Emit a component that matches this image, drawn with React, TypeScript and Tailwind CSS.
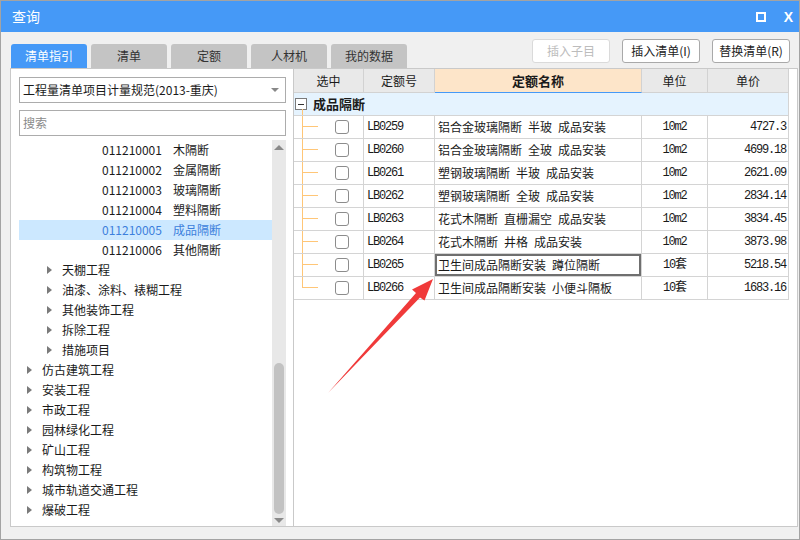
import React from "react";

type TreeRow = { level: 1 | 2 | 3; code?: string; name: string; active?: boolean };

const treeRows: TreeRow[] = [
  { level: 3, code: "011210001", name: "木隔断" },
  { level: 3, code: "011210002", name: "金属隔断" },
  { level: 3, code: "011210003", name: "玻璃隔断" },
  { level: 3, code: "011210004", name: "塑料隔断" },
  { level: 3, code: "011210005", name: "成品隔断", active: true },
  { level: 3, code: "011210006", name: "其他隔断" },
  { level: 2, name: "天棚工程" },
  { level: 2, name: "油漆、涂料、裱糊工程" },
  { level: 2, name: "其他装饰工程" },
  { level: 2, name: "拆除工程" },
  { level: 2, name: "措施项目" },
  { level: 1, name: "仿古建筑工程" },
  { level: 1, name: "安装工程" },
  { level: 1, name: "市政工程" },
  { level: 1, name: "园林绿化工程" },
  { level: 1, name: "矿山工程" },
  { level: 1, name: "构筑物工程" },
  { level: 1, name: "城市轨道交通工程" },
  { level: 1, name: "爆破工程" },
];

const rows = [
  ["LB0259", "铝合金玻璃隔断 半玻 成品安装", "10m2", "4727.3"],
  ["LB0260", "铝合金玻璃隔断 全玻 成品安装", "10m2", "4699.18"],
  ["LB0261", "塑钢玻璃隔断 半玻 成品安装", "10m2", "2621.09"],
  ["LB0262", "塑钢玻璃隔断 全玻 成品安装", "10m2", "2834.14"],
  ["LB0263", "花式木隔断 直栅漏空 成品安装", "10m2", "3834.45"],
  ["LB0264", "花式木隔断 井格 成品安装", "10m2", "3873.98"],
  ["LB0265", "卫生间成品隔断安装 蹲位隔断", "10套", "5218.54"],
  ["LB0266", "卫生间成品隔断安装 小便斗隔板", "10套", "1683.16"],
];

const tabs = ["清单指引", "清单", "定额", "人材机", "我的数据"];

const mono = "font-['Liberation_Mono','Noto_Sans_CJK_SC',monospace] text-[12px] tracking-[-1.2px]";

const Caret = () => (
  <span className="inline-block w-0 h-0 border-y-[4px] border-y-transparent border-l-[5px] border-l-[#7a7a7a]" />
);

const App = () => {
  return (
    <div className="relative w-[800px] h-[540px] flex flex-col bg-[#f0f0f0] border border-[#a3a3a3] font-['Noto_Sans_CJK_SC',sans-serif] text-[#1a1a1a] overflow-hidden">
      {/* title bar */}
      <div className="h-[31px] bg-[#4599f7] flex items-center pl-[11px] pr-[6px] text-white">
        <span className="text-[14px]">查询</span>
        <div className="ml-auto flex items-center gap-[18px]">
          <span className="w-[10px] h-[10px] border-2 border-white" />
          <span className="font-['Liberation_Sans',sans-serif] font-bold text-[14px] leading-none">X</span>
        </div>
      </div>

      {/* tabs and buttons */}
      <div className="h-[36px] flex pl-[10px] pr-[9px]">
        <div className="flex gap-[4px] self-end">
          {tabs.map((t, i) => (
            <div
              key={t}
              className={
                i === 0
                  ? "w-[76px] h-[24px] rounded-t-[3px] bg-[#4599f7] text-white text-[12px] flex items-center justify-center"
                  : "w-[76px] h-[24px] rounded-t-[3px] bg-[#c4c4c4] text-[#333] text-[12px] flex items-center justify-center"
              }
            >
              {t}
            </div>
          ))}
        </div>
        <div className="ml-auto flex gap-[12px] mt-[7px] self-start">
          <button className="w-[78px] h-[24px] rounded-[3px] border border-[#dadada] bg-white text-[12px] text-[#bcbcbc]">
            插入子目
          </button>
          <button className="w-[78px] h-[24px] rounded-[3px] border border-[#a9a9a9] bg-white text-[12px] text-[#222]">
            插入清单(I)
          </button>
          <button className="w-[78px] h-[24px] rounded-[3px] border border-[#a9a9a9] bg-white text-[12px] text-[#222]">
            替换清单(R)
          </button>
        </div>
      </div>

      {/* main */}
      <div className="h-[459px] flex pl-[9px] pr-[1px]">
        {/* left panel */}
        <div className="w-[283px] h-full bg-white border border-r-0 border-[#c9c9c9] flex flex-col">
          <div className="ml-[8px] mt-[8px] w-[267px] h-[26px] border border-[#acacac] flex items-center pl-[3px] pr-[6px] text-[12px]">
            <span>工程量清单项目计量规范(2013-重庆)</span>
            <span className="ml-auto w-0 h-0 border-x-[4px] border-x-transparent border-t-[4px] border-t-[#888]" />
          </div>
          <div className="ml-[8px] mt-[7px] w-[267px] h-[26px] border border-[#acacac] flex items-center pl-[3px] text-[12px] text-[#8a8a8a]">
            搜索
          </div>
          <div className="ml-[8px] mt-[4px] w-[267px] flex-1 flex min-h-0">
            <div className="flex-1 flex flex-col">
              {treeRows.map((r) => (
                <div
                  key={r.name}
                  className={
                    r.active
                      ? "h-[20px] flex items-center bg-[#cce8ff] text-[#3d7fdc] text-[12px]"
                      : "h-[20px] flex items-center text-[12px]"
                  }
                >
                  {r.level === 3 && (
                    <div className="pl-[83px] flex">
                      <span className="w-[71px]">{r.code}</span>
                      <span>{r.name}</span>
                    </div>
                  )}
                  {r.level === 2 && (
                    <div className="pl-[28px] flex items-center">
                      <Caret />
                      <span className="ml-[10px]">{r.name}</span>
                    </div>
                  )}
                  {r.level === 1 && (
                    <div className="pl-[8px] flex items-center">
                      <Caret />
                      <span className="ml-[10px]">{r.name}</span>
                    </div>
                  )}
                </div>
              ))}
            </div>
            {/* scrollbar */}
            <div className="w-[14px] bg-[#e8e8e8] flex flex-col items-center">
              <div className="h-[14px] flex items-center justify-center">
                <span className="w-0 h-0 border-x-[5px] border-x-transparent border-b-[5px] border-b-[#8a8a8a]" />
              </div>
              <div className="mt-[209px] w-[10px] h-[151px] rounded-full bg-[#c2c2c2]" />
              <div className="mt-auto h-[12px] flex items-center justify-center">
                <span className="w-0 h-0 border-x-[5px] border-x-transparent border-t-[5px] border-t-[#8a8a8a]" />
              </div>
            </div>
          </div>
        </div>

        {/* right panel */}
        <div className="flex-1 h-full bg-white border border-[#c9c9c9]">
          <div className="w-[495px] text-[12px]">
            <div className="h-[24px] flex bg-[#e9e9e9]">
              <div className="w-[70px] flex items-center justify-center border-r border-b border-[#d2d2d2]">选中</div>
              <div className="w-[71px] flex items-center justify-center border-r border-b border-[#d2d2d2]">定额号</div>
              <div className="w-[207px] flex items-center justify-center border-r border-[#d2d2d2] border-b border-b-[#4599f7] bg-[#fde5c9] font-bold text-[13px]">
                定额名称
              </div>
              <div className="w-[66px] flex items-center justify-center border-r border-b border-[#d2d2d2]">单位</div>
              <div className="w-[81px] flex items-center justify-center border-r border-b border-[#d2d2d2]">单价</div>
            </div>

            <div className="h-[23px] flex items-center bg-[#e5f3fe] border-b border-r border-[#d4d4d4]">
              <div className="relative ml-[1px] w-[12px] h-[12px] border border-[#7a7a7a] bg-white flex items-center justify-center">
                <span className="w-[6px] h-px bg-[#333]" />
                <span className="absolute left-[6px] top-full w-px h-[6px] bg-[#ffc677]" />
              </div>
              <span className="ml-[6px] font-bold text-[13px]">成品隔断</span>
            </div>

            {rows.map((r, i) => (
              <div key={r[0]} className="h-[23px] flex border-b border-[#d4d4d4]">
                <div className="w-[70px] flex items-center border-r border-[#d4d4d4]">
                  <div className="ml-[8px] w-[16px] h-full flex flex-col">
                    <div className="h-[11px] border-l border-b border-[#ffc677]" />
                    {i < rows.length - 1 && <div className="flex-1 border-l border-[#ffc677]" />}
                  </div>
                  <span className="ml-[17px] w-[14px] h-[14px] rounded-[3px] border border-[#8c8c8c] bg-white" />
                </div>
                <div className={`w-[71px] flex items-center pl-[3px] border-r border-[#d4d4d4] ${mono}`}>{r[0]}</div>
                <div
                  className={
                    i === 6
                      ? "w-[207px] flex items-center pl-[3px] border-r border-[#d4d4d4] shadow-[inset_0_0_0_2px_#6f6f6f] whitespace-pre"
                      : "w-[207px] flex items-center pl-[3px] border-r border-[#d4d4d4] whitespace-pre"
                  }
                >
                  {r[1].replace(/ /g, "\u2002")}
                </div>
                <div className={`w-[66px] flex items-center justify-center border-r border-[#d4d4d4] ${mono}`}>{r[2]}</div>
                <div className={`w-[81px] flex items-center justify-end pr-[2px] border-r border-[#d4d4d4] ${mono}`}>{r[3]}</div>
              </div>
            ))}
          </div>
        </div>
      </div>

      {/* annotation arrow */}
      <svg className="absolute left-0 top-0 pointer-events-none" width="800" height="540" viewBox="0 0 800 540">
        <polygon
          points="327,392 419,296.5 423.5,299.5 432,278 411,288.5 415,292"
          fill="#f03a3a"
        />
      </svg>
    </div>
  );
};

export default App;
